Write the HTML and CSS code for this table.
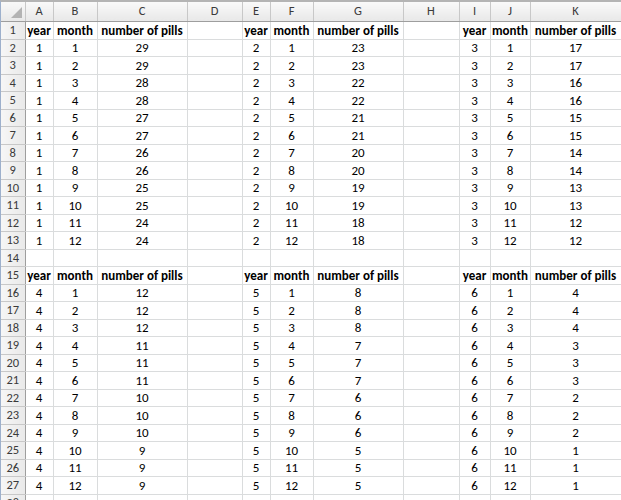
FILE: index.html
```html
<!DOCTYPE html>
<html>
<head>
<meta charset="utf-8">
<link rel="stylesheet" href="styles.css">
</head>
<body>
<div class="sheet">
<table class="grid">
<colgroup>
<col class="c-rh"><col class="c-a"><col class="c-b"><col class="c-c"><col class="c-d"><col class="c-e"><col class="c-f"><col class="c-g"><col class="c-h"><col class="c-i"><col class="c-j"><col class="c-k">
</colgroup>
<thead>
<tr class="colhead"><th class="corner"><span class="tri"></span></th><th>A</th><th>B</th><th>C</th><th>D</th><th>E</th><th>F</th><th>G</th><th>H</th><th>I</th><th>J</th><th>K</th></tr>
</thead>
<tbody>
<tr class="hdr"><th>1</th><td>year</td><td>month</td><td>number of pills</td><td></td><td>year</td><td>month</td><td>number of pills</td><td></td><td>year</td><td>month</td><td>number of pills</td></tr>
<tr><th>2</th><td>1</td><td>1</td><td>29</td><td></td><td>2</td><td>1</td><td>23</td><td></td><td>3</td><td>1</td><td>17</td></tr>
<tr><th>3</th><td>1</td><td>2</td><td>29</td><td></td><td>2</td><td>2</td><td>23</td><td></td><td>3</td><td>2</td><td>17</td></tr>
<tr><th>4</th><td>1</td><td>3</td><td>28</td><td></td><td>2</td><td>3</td><td>22</td><td></td><td>3</td><td>3</td><td>16</td></tr>
<tr><th>5</th><td>1</td><td>4</td><td>28</td><td></td><td>2</td><td>4</td><td>22</td><td></td><td>3</td><td>4</td><td>16</td></tr>
<tr><th>6</th><td>1</td><td>5</td><td>27</td><td></td><td>2</td><td>5</td><td>21</td><td></td><td>3</td><td>5</td><td>15</td></tr>
<tr><th>7</th><td>1</td><td>6</td><td>27</td><td></td><td>2</td><td>6</td><td>21</td><td></td><td>3</td><td>6</td><td>15</td></tr>
<tr><th>8</th><td>1</td><td>7</td><td>26</td><td></td><td>2</td><td>7</td><td>20</td><td></td><td>3</td><td>7</td><td>14</td></tr>
<tr><th>9</th><td>1</td><td>8</td><td>26</td><td></td><td>2</td><td>8</td><td>20</td><td></td><td>3</td><td>8</td><td>14</td></tr>
<tr><th>10</th><td>1</td><td>9</td><td>25</td><td></td><td>2</td><td>9</td><td>19</td><td></td><td>3</td><td>9</td><td>13</td></tr>
<tr><th>11</th><td>1</td><td>10</td><td>25</td><td></td><td>2</td><td>10</td><td>19</td><td></td><td>3</td><td>10</td><td>13</td></tr>
<tr><th>12</th><td>1</td><td>11</td><td>24</td><td></td><td>2</td><td>11</td><td>18</td><td></td><td>3</td><td>11</td><td>12</td></tr>
<tr><th>13</th><td>1</td><td>12</td><td>24</td><td></td><td>2</td><td>12</td><td>18</td><td></td><td>3</td><td>12</td><td>12</td></tr>
<tr><th>14</th><td></td><td></td><td></td><td></td><td></td><td></td><td></td><td></td><td></td><td></td><td></td></tr>
<tr class="hdr"><th>15</th><td>year</td><td>month</td><td>number of pills</td><td></td><td>year</td><td>month</td><td>number of pills</td><td></td><td>year</td><td>month</td><td>number of pills</td></tr>
<tr><th>16</th><td>4</td><td>1</td><td>12</td><td></td><td>5</td><td>1</td><td>8</td><td></td><td>6</td><td>1</td><td>4</td></tr>
<tr><th>17</th><td>4</td><td>2</td><td>12</td><td></td><td>5</td><td>2</td><td>8</td><td></td><td>6</td><td>2</td><td>4</td></tr>
<tr><th>18</th><td>4</td><td>3</td><td>12</td><td></td><td>5</td><td>3</td><td>8</td><td></td><td>6</td><td>3</td><td>4</td></tr>
<tr><th>19</th><td>4</td><td>4</td><td>11</td><td></td><td>5</td><td>4</td><td>7</td><td></td><td>6</td><td>4</td><td>3</td></tr>
<tr><th>20</th><td>4</td><td>5</td><td>11</td><td></td><td>5</td><td>5</td><td>7</td><td></td><td>6</td><td>5</td><td>3</td></tr>
<tr><th>21</th><td>4</td><td>6</td><td>11</td><td></td><td>5</td><td>6</td><td>7</td><td></td><td>6</td><td>6</td><td>3</td></tr>
<tr><th>22</th><td>4</td><td>7</td><td>10</td><td></td><td>5</td><td>7</td><td>6</td><td></td><td>6</td><td>7</td><td>2</td></tr>
<tr><th>23</th><td>4</td><td>8</td><td>10</td><td></td><td>5</td><td>8</td><td>6</td><td></td><td>6</td><td>8</td><td>2</td></tr>
<tr><th>24</th><td>4</td><td>9</td><td>10</td><td></td><td>5</td><td>9</td><td>6</td><td></td><td>6</td><td>9</td><td>2</td></tr>
<tr><th>25</th><td>4</td><td>10</td><td>9</td><td></td><td>5</td><td>10</td><td>5</td><td></td><td>6</td><td>10</td><td>1</td></tr>
<tr><th>26</th><td>4</td><td>11</td><td>9</td><td></td><td>5</td><td>11</td><td>5</td><td></td><td>6</td><td>11</td><td>1</td></tr>
<tr><th>27</th><td>4</td><td>12</td><td>9</td><td></td><td>5</td><td>12</td><td>5</td><td></td><td>6</td><td>12</td><td>1</td></tr>
<tr><th>28</th><td></td><td></td><td></td><td></td><td></td><td></td><td></td><td></td><td></td><td></td><td></td></tr>
</tbody>
</table>
</div>
</body>
</html>
```
FILE: styles.css
```css
html, body {
  margin: 0;
  padding: 0;
  background: #ffffff;
  overflow: hidden;
}
.sheet {
  width: 621px;
  height: 500px;
  overflow: hidden;
  border-top: 2px solid #b4b4b4;
  border-left: 1px solid #9db0cc;
  box-sizing: border-box;
  font-family: Carlito, Lato, "Open Sans", sans-serif;
  font-size: 13px;
  color: #000;
}
.grid {
  border-collapse: collapse;
  table-layout: fixed;
  width: 620px;
}
.c-rh { width: 24px; }
.c-a { width: 28px; }
.c-b { width: 44px; }
.c-c { width: 90px; }
.c-d { width: 55px; }
.c-e { width: 28px; }
.c-f { width: 43px; }
.c-g { width: 90px; }
.c-h { width: 56px; }
.c-i { width: 31px; }
.c-j { width: 40px; }
.c-k { width: 91px; }
.grid td, .grid th {
  padding: 0;
  text-align: center;
  white-space: nowrap;
  overflow: hidden;
  line-height: 1;
}
.grid tbody tr {
  height: 17.5px;
}
.grid td {
  border: 1px solid #dadcdd;
}
.colhead th {
  height: 19px;
  background: linear-gradient(#f9f9f9, #e8e8e8);
  border-right: 1px solid #c8c8c8;
  border-bottom: 1px solid #9e9e9e;
  color: #3a3a3a;
  font-weight: normal;
  font-size: 12.5px;
}
.grid tbody th {
  background: linear-gradient(90deg, #f6f6f6, #e9e9e9);
  border-right: 1px solid #9e9e9e;
  border-bottom: 1px solid #c8c8c8;
  color: #3a3a3a;
  font-weight: normal;
  font-size: 12.5px;
}
.corner {
  position: relative;
}
.tri {
  position: absolute;
  right: 3px;
  bottom: 3px;
  width: 0;
  height: 0;
  border-left: 11px solid transparent;
  border-bottom: 11px solid #b3b3b3;
}
.hdr td {
  font-weight: bold;
}
```
